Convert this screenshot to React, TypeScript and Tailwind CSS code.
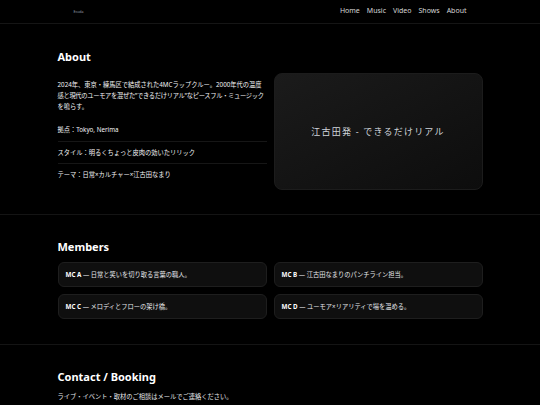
const font = { fontFamily: '"Noto Sans", "Noto Sans CJK JP", sans-serif' }

const navItems = ['Home', 'Music', 'Video', 'Shows', 'About']

const members = [
  { name: 'MC A', text: '日常と笑いを切り取る言葉の職人。' },
  { name: 'MC B', text: '江古田なまりのパンチライン担当。' },
  { name: 'MC C', text: 'メロディとフローの架け橋。' },
  { name: 'MC D', text: 'ユーモア×リアリティで場を温める。' },
]

export default function App() {
  return (
    <div className="min-h-screen bg-black text-gray-100" style={font}>
      {/* Header */}
      <header className="h-[24px] border-b border-[#151515]">
        <div className="mx-auto flex h-full w-[425px] items-center justify-between">
          <span className="pl-[16px] text-[3.5px] text-gray-400">Ecoda</span>
          <nav className="flex items-center gap-[7px] pr-[16px] text-[7px] text-[#d6d6d6]">
            {navItems.map((n) => (
              <a key={n}>{n}</a>
            ))}
          </nav>
        </div>
      </header>

      {/* About */}
      <section className="border-b border-[#141414] pt-[26px] pb-[24px]">
        <div className="mx-auto w-[425px]">
          <h2 className="text-[11px] leading-[14px] font-bold text-white">About</h2>
          <div className="mt-[9px] grid grid-cols-2 gap-[7px]">
            <div className="pt-[6px]">
              <p className="text-[6.25px] leading-[11px] text-gray-100">
                2024年、東京・練馬区で結成された4MCラップクルー。2000年代の温度
                <br />
                <span className="tracking-[-0.3px]">
                  感と現代のユーモアを混ぜた"できるだけリアル"なピースフル・ミュージック
                </span>
                <br />
                を鳴らす。
              </p>
              <ul className="mt-[7px] text-[6.25px] text-gray-100">
                <li className="border-b border-[#161616] py-[5.25px] leading-[11px]">拠点：Tokyo, Nerima</li>
                <li className="border-b border-[#161616] py-[5.25px] leading-[11px]">スタイル：明るくちょっと皮肉の効いたリリック</li>
                <li className="py-[5.25px] leading-[11px]">テーマ：日常×カルチャー×江古田なまり</li>
              </ul>
            </div>
            <div className="flex h-[117px] items-center justify-center rounded-[8px] border border-[#1c1c1c] bg-gradient-to-br from-[#1b1b1b] to-[#0d0d0d]">
              <span className="text-[9px] tracking-[1.2px] text-gray-300">江古田発 - できるだけリアル</span>
            </div>
          </div>
        </div>
      </section>

      {/* Members */}
      <section className="border-b border-[#141414] pt-[25px] pb-[25px]">
        <div className="mx-auto w-[425px]">
          <h2 className="text-[11px] leading-[14px] font-bold text-white">Members</h2>
          <div className="mt-[8px] grid grid-cols-2 gap-[7px]">
            {members.map((m) => (
              <div
                key={m.name}
                className="flex h-[25px] items-center rounded-[6px] border border-[#1e1e1e] bg-[#0f0f0f] px-[7px] text-[6.25px] text-gray-200"
              >
                <span className="font-bold text-white">{m.name}</span>
                <span>&nbsp;— {m.text}</span>
              </div>
            ))}
          </div>
        </div>
      </section>

      {/* Contact */}
      <section className="pt-[25px] pb-[24px]">
        <div className="mx-auto w-[425px]">
          <h2 className="text-[11px] leading-[14px] font-bold text-white">Contact / Booking</h2>
          <p className="mt-[7px] text-[6.25px] leading-[11px] text-gray-200">
            ライブ・イベント・取材のご相談はメールでご連絡ください。
          </p>
        </div>
      </section>
    </div>
  )
}
